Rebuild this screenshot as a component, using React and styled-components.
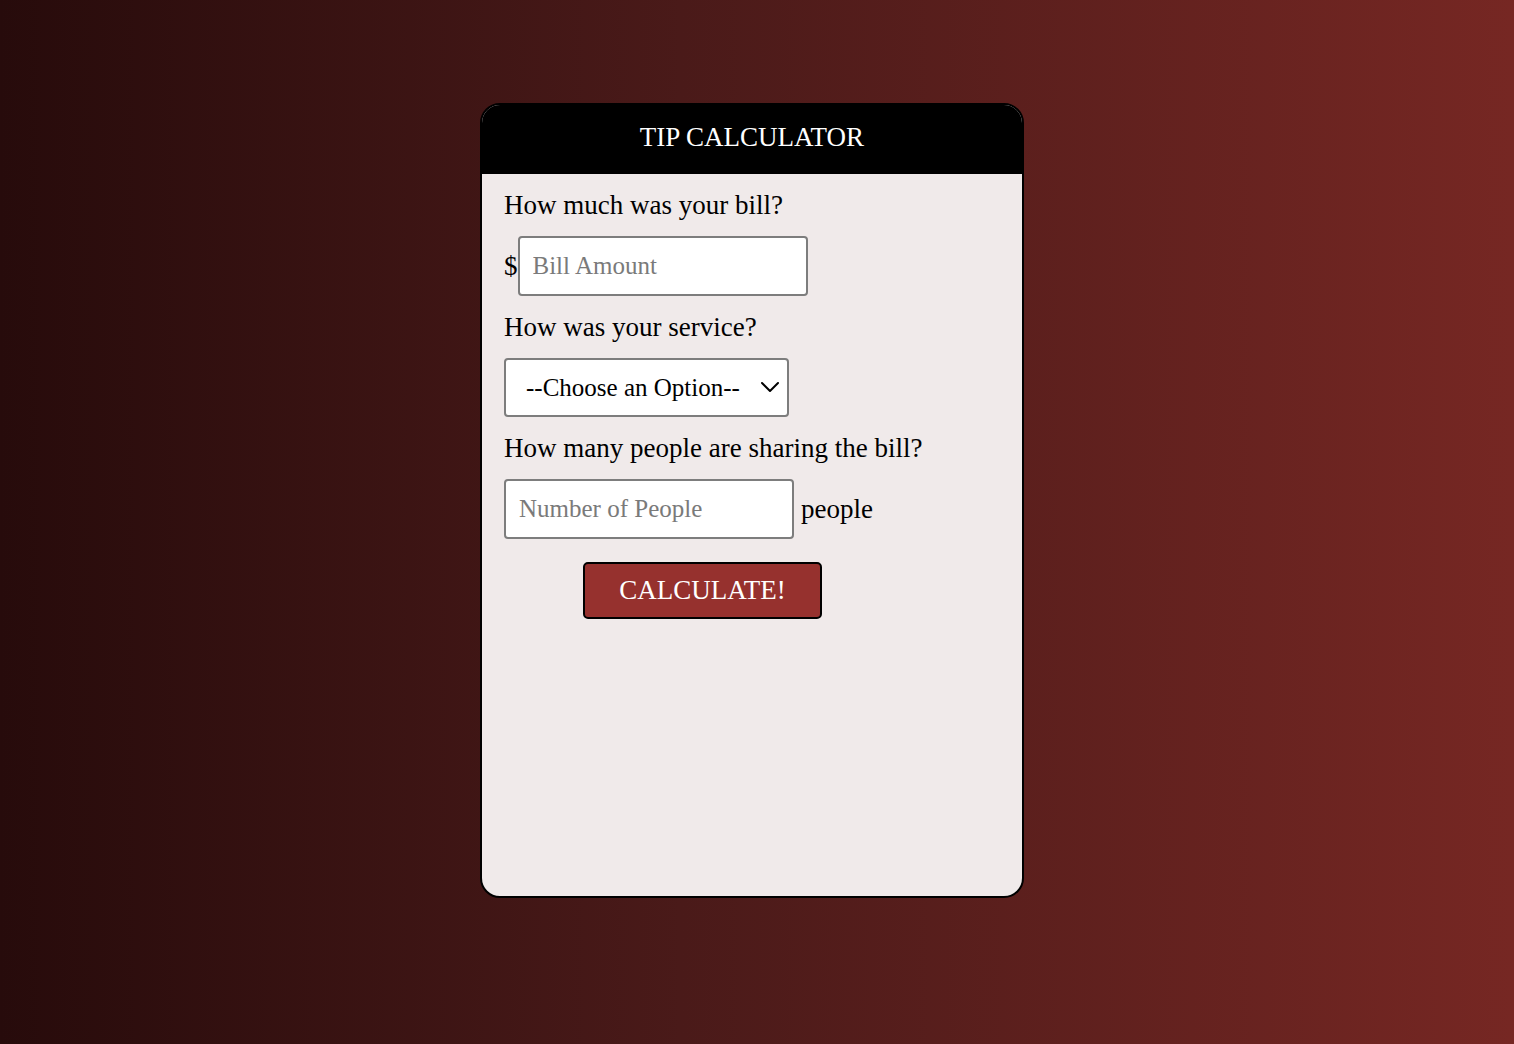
import React from "react";
import styled, { createGlobalStyle } from "styled-components";

const GlobalStyle = createGlobalStyle`
    html, body {
        margin: 0;
        padding: 0;
        height: 100%;
    }
    body {
        background: linear-gradient(to right, #270b0b 0%, #4a1a19 45%, #762723 100%);
        font-family: "Liberation Serif", "Times New Roman", serif;
    }
    #root {
        min-height: 100%;
    }
`;

const Page = styled.main`
    width: 100%;
    height: 1044px;
    display: flex;
    justify-content: center;
    padding: 103px 10px 0 0;
    box-sizing: border-box;
`;

const Card = styled.section`
    width: 544px;
    height: 795px;
    box-sizing: border-box;
    border: 2px solid #000;
    border-radius: 20px;
    background: #f0eaea;
    overflow: hidden;
    display: flex;
    flex-direction: column;
`;

const Header = styled.header`
    background: #000;
    height: 69px;
    padding-bottom: 4px;
    box-sizing: border-box;
    display: flex;
    align-items: center;
    justify-content: center;

    h1 {
        margin: 0;
        color: #fff;
        font-size: 27px;
        font-weight: 400;
    }
`;

const Form = styled.form`
    display: flex;
    flex-direction: column;
    align-items: flex-start;
    gap: 17px;
    padding: 17px 22px 0;
`;

const Label = styled.p`
    margin: 0;
    font-size: 27px;
    line-height: 28px;
    color: #000;
`;

const Row = styled.div`
    display: flex;
    align-items: center;
    gap: ${(p) => p.$gap || 0}px;
    font-size: 27px;
    color: #000;
`;

const Field = styled.input`
    width: ${(p) => p.$width}px;
    height: 60px;
    box-sizing: border-box;
    border: 2px solid #7d7d7d;
    border-radius: 4px;
    background: #fff;
    padding: 0 13px;
    font-family: "Liberation Serif", "Times New Roman", serif;
    font-size: 25px;
    color: #000;
    outline: none;

    &::placeholder {
        color: #7a7a7a;
    }
`;

const SelectWrap = styled.div`
    position: relative;
    width: 285px;
    height: 59px;
`;

const Select = styled.select`
    appearance: none;
    width: 100%;
    height: 100%;
    box-sizing: border-box;
    border: 2px solid #7d7d7d;
    border-radius: 4px;
    background: #fff;
    padding: 0 40px 0 20px;
    font-family: "Liberation Serif", "Times New Roman", serif;
    font-size: 25px;
    color: #000;
    outline: none;
`;

const Chevron = styled.svg`
    position: absolute;
    right: 9px;
    top: 50%;
    width: 20px;
    height: 12px;
    margin-top: -7px;
    pointer-events: none;
`;

const Button = styled.button`
    margin: 6px 0 0 79px;
    width: 239px;
    height: 57px;
    box-sizing: border-box;
    border: 2px solid #000;
    border-radius: 5px;
    background: #96312e;
    color: #fff;
    font-family: "Liberation Serif", "Times New Roman", serif;
    font-size: 27px;
    cursor: pointer;
`;

const App = () => {
    return (
        <>
            <GlobalStyle />
            <Page>
                <Card>
                    <Header>
                        <h1>TIP CALCULATOR</h1>
                    </Header>
                    <Form onSubmit={(e) => e.preventDefault()}>
                        <Label>How much was your bill?</Label>
                        <Row>
                            $
                            <Field $width={290} placeholder="Bill Amount" />
                        </Row>
                        <Label>How was your service?</Label>
                        <SelectWrap>
                            <Select defaultValue="0">
                                <option value="0">--Choose an Option--</option>
                                <option value="0.3">30% - Outstanding</option>
                                <option value="0.2">20% - Good</option>
                                <option value="0.15">15% - It was OK</option>
                                <option value="0.1">10% - Bad</option>
                                <option value="0.05">5% - Terrible</option>
                            </Select>
                            <Chevron viewBox="0 0 20 12">
                                <path
                                    d="M2 2 L10 10 L18 2"
                                    fill="none"
                                    stroke="#000"
                                    strokeWidth="2"
                                    strokeLinecap="round"
                                    strokeLinejoin="round"
                                />
                            </Chevron>
                        </SelectWrap>
                        <Label>How many people are sharing the bill?</Label>
                        <Row $gap={7}>
                            <Field $width={290} placeholder="Number of People" />
                            <span>people</span>
                        </Row>
                        <Button type="submit">CALCULATE!</Button>
                    </Form>
                </Card>
            </Page>
        </>
    );
};

export default App;
